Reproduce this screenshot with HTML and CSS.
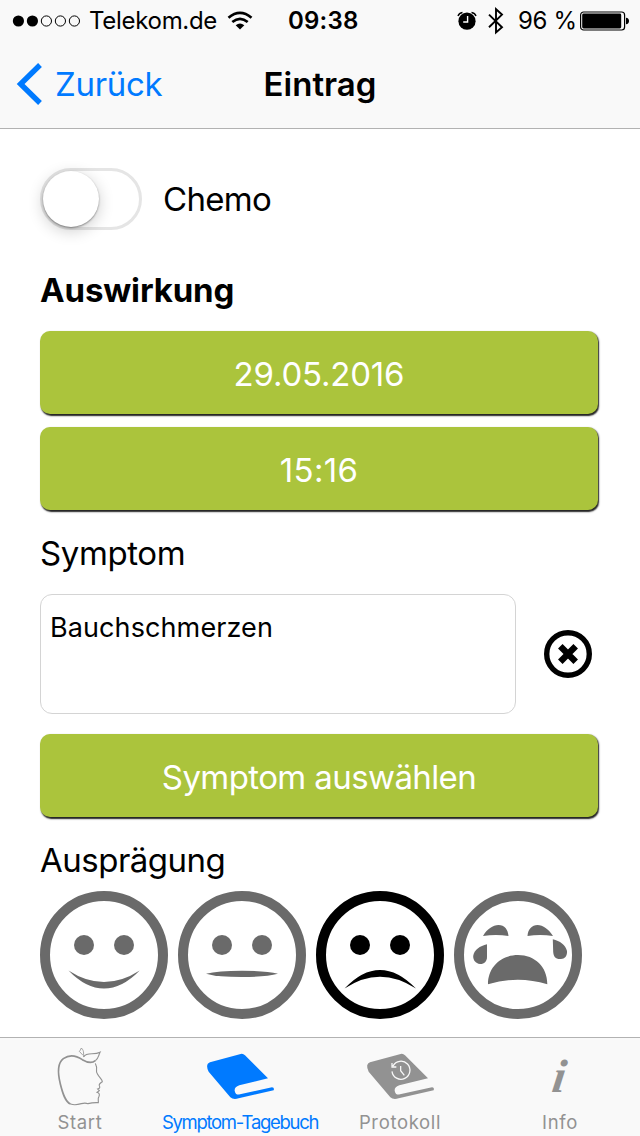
FILE: index.html
```
<!DOCTYPE html>
<html lang="de">
<head>
	<meta charset="UTF-8">
	<title>Eintrag</title>
	<link rel="stylesheet" href="styles.css">
</head>
<body>
	<div id="statusBar">
		<svg class="signal" width="70" height="14" viewBox="0 0 70 14">
			<circle cx="6.4" cy="7" r="5.6"/>
			<circle cx="20.4" cy="7" r="5.6"/>
			<g fill="none" stroke="#000">
				<circle cx="34.4" cy="7" r="5.1"/>
				<circle cx="48.4" cy="7" r="5.1"/>
				<circle cx="62.4" cy="7" r="5.1"/>
			</g>
		</svg>
		<span class="carrier">Telekom.de</span>
		<svg class="wifi" width="26" height="20" viewBox="0 0 26 20">
			<g fill="none" stroke="#000" stroke-width="2.7">
				<path d="M1.5 6.7Q13 -3 24.5 6.7"/>
				<path d="M5.3 11Q13 4.6 20.7 11"/>
			</g>
			<path d="M8.7 14.2Q13 10.8 17.3 14.2L13 18.6Z"/>
		</svg>
		<span class="time">09:38</span>
		<svg class="alarm" width="20" height="20" viewBox="0 0 20 20">
			<circle cx="10" cy="10.2" r="8.6"/>
			<path d="M1 5Q2 2 5.5 1.5M14.5 1.5Q18 2 19 5" fill="none" stroke="#000" stroke-width="1.4"/>
			<path d="M10.6 5V11H6.2" fill="none" stroke="#fff" stroke-width="1.4"/>
		</svg>
		<svg class="bluetooth" width="16" height="28" viewBox="0 0 16 28">
			<path d="M1 7.6L14 20.2L8 25.4V2.2L14 7.6L1 20.2" fill="none" stroke="#000" stroke-width="1.9"/>
		</svg>
		<span class="percent">96 %</span>
		<svg class="battery" width="50" height="20" viewBox="0 0 50 20">
			<rect x="0.6" y="1" width="44" height="18" rx="3" fill="none" stroke="#000" stroke-width="1.2"/>
			<rect x="2.2" y="2.6" width="39" height="14.8" rx="1.4"/>
			<path d="M46 6.8Q49 7 49 10T46 13.2Z"/>
		</svg>
	</div>
	<div id="navBar">
		<a class="back">
			<svg width="26" height="42" viewBox="0 0 26 42"><path d="M24 2L4.6 21L24 40" fill="none" stroke="#007aff" stroke-width="5.4"/></svg>
			<span>Zurück</span>
		</a>
		<span class="title">Eintrag</span>
	</div>

	<div id="content">
		<div class="switchRow">
			<div class="switch"><div class="knob"></div></div>
			<span class="chemo">Chemo</span>
		</div>
		<h2>Auswirkung</h2>
		<button class="mainButton date">29.05.2016</button>
		<button class="mainButton clock">15:16</button>
		<label class="symptomLabel">Symptom</label>
		<div class="symptomRow">
			<div class="textBox">Bauchschmerzen</div>
			<svg class="clear" width="48" height="48" viewBox="0 0 48 48" fill="none" stroke="#000">
				<circle cx="24" cy="24" r="21.3" stroke-width="5.4"/>
				<path d="M16.3 16.3L31.7 31.7M31.7 16.3L16.3 31.7" stroke-width="6.4"/>
			</svg>
		</div>
		<button class="mainButton choose">Symptom auswählen</button>
		<label class="levelLabel">Ausprägung</label>
		<div class="faces">
			<svg class="face" viewBox="0 0 128 128">
				<circle class="ring" cx="64" cy="64" r="59"/>
				<circle cx="44" cy="54" r="10"/>
				<circle cx="84" cy="54" r="10"/>
				<path d="M28.5 79.5Q46 97.6 64 97.6T99.7 79.5Q82 91 64 91T28.5 79.5Z"/>
			</svg>
			<svg class="face" viewBox="0 0 128 128">
				<circle class="ring" cx="64" cy="64" r="59"/>
				<circle cx="44" cy="54" r="10"/>
				<circle cx="84" cy="54" r="10"/>
				<path d="M28 82.8Q40 79.7 64 79.7T100 82.8Q88 86 64 86T28 82.8Z"/>
			</svg>
			<svg class="face selected" viewBox="0 0 128 128">
				<circle class="ring" cx="64" cy="64" r="59"/>
				<circle cx="44" cy="54" r="10"/>
				<circle cx="84" cy="54" r="10"/>
				<path d="M28.5 97.6Q46 79 64 79T100 97.6Q82 85.7 64 85.7T28.5 97.6Z"/>
			</svg>
			<svg class="face" viewBox="0 0 128 128">
				<circle class="ring" cx="64" cy="64" r="59"/>
				<!-- brows -->
				<path d="M29 45C33 38 39 34 44.5 34C50.5 34 54 38.5 54.5 45Q42 43.2 29 45Z"/>
				<path d="M73.5 45C74 38 78 34 83.5 34C89 34 94.5 38 99 45Q86 43.2 73.5 45Z"/>
				<!-- tears -->
				<path d="M33 53.3V66C33 71 29.5 73.3 26 73C21.5 72.5 19 69 19.2 65C20 59 26 55 33 53.3Z"/>
				<path d="M98.8 48.3C106 50 111.5 54 113 60C113.5 65 110.5 68 107 68C102 68.5 99.5 66 99.2 61Z"/>
				<path d="M34 93.3C34 76 47 64 64 64S93.5 76 93.3 93.3Q64 84 34 93.3Z"/>
			</svg>
		</div>
	</div>

	<div id="tabBar">
		<div class="tab start">
			<svg width="60" height="70" viewBox="0 0 180 210" fill="none" stroke="#929292" stroke-width="3.4">
				<path stroke-width="5" d="M136 62C125 71 109 66 97 59C78 46 58 43 40 56C22 70 23 100 31 132C38 160 46 187 62 192"/>
				<path d="M62 192C74 197 84 194 94 191Q105 188 114 191Q129 187 145 188C146 181 142 176 147 169C150 163 147 159 141 157L148 152L143 147C149 145 151 142 148 137C146 131 151 129 157 125C158 119 148 113 142 101C136 91 142 86 139 79L136 70"/>
				<path d="M100 51C111 34 132 47 150 37C145 48 145 57 136 62"/>
				<path d="M103 50C98 45 105 34 94 24Q91 32 88 34L99 46" stroke-width="2.5"/>
			</svg>
			<span>Start</span>
		</div>
		<div class="tab diary active">
			<svg width="71" height="49" viewBox="615 66 213 147">
				<path d="M722 72Q729 70 735 76L804 145L718 166Q703 171 704 182Q707 197 720 193L816 172Q824 173 821 181L716 205Q700 210 691 202L626 125Q615 103 630 97Z"/>
			</svg>
			<span>Symptom-Tagebuch</span>
		</div>
		<div class="tab log">
			<svg width="71" height="49" viewBox="615 66 213 147">
				<path d="M722 72Q729 70 735 76L804 145L718 166Q703 171 704 182Q707 197 720 193L816 172Q824 173 821 181L716 205Q700 210 691 202L626 125Q615 103 630 97Z"/>
				<path d="M696 124A27 27 0 1 0 699 108M696 99V111H709M722 108V122L733 136" fill="none" stroke="#f9f9f9" stroke-width="3.8"/>
			</svg>
			<span>Protokoll</span>
		</div>
		<div class="tab info">
			<i class="infoIcon">i</i>
			<span>Info</span>
		</div>
	</div>
</body>
</html>
```
FILE: styles.css
```
body {
	margin: 0;
	width: 640px;
	height: 1136px;
	display: flex;
	flex-direction: column;
	overflow: hidden;
	background-color: #fff;
	color: #000;
	font-family: Inter, "Liberation Sans", sans-serif;
	font-size: 33px;
	line-height: 40px;
}
svg {
	display: block;
	flex: none;
}
#statusBar {
	display: flex;
	align-items: center;
	height: 41px;
	background-color: #f9f9f9;
	font-size: 24px;
	white-space: nowrap;
}
.signal {
	margin-left: 12px;
}
.carrier {
	width: 138px;
	margin-left: 7px;
	letter-spacing: -0.3px;
}
.time {
	width: 169px;
	margin-left: 35px;
	font-weight: 600;
	letter-spacing: 0.2px;
}
.bluetooth {
	margin-left: 11px;
}
.percent {
	width: 62px;
	margin-left: 14px;
	letter-spacing: -0.3px;
}
#navBar {
	display: grid;
	grid-template-columns: 1fr auto 1fr;
	align-items: center;
	box-sizing: border-box;
	height: 88px;
	padding-bottom: 2px;
	background-color: #f9f9f9;
	border-bottom: 1px solid #b2b2b2;
}
.back {
	display: flex;
	align-items: center;
	gap: 13px;
	padding-left: 16px;
	color: #007aff;
	letter-spacing: -0.3px;
}
.title {
	font-weight: 600;
}
#content {
	flex: 1;
	display: flex;
	flex-direction: column;
	padding: 39px 40px 0;
}
.switchRow {
	display: flex;
	align-items: center;
	gap: 21px;
	height: 62px;
}
.switch {
	box-sizing: border-box;
	width: 102px;
	height: 62px;
	border: 3px solid #e5e5e5;
	border-radius: 31px;
}
.knob {
	width: 56px;
	height: 56px;
	border-radius: 50%;
	background-color: #fff;
	box-shadow: 0 1px 2px rgba(0, 0, 0, 0.4), 0 4px 16px rgba(0, 0, 0, 0.2);
}
.chemo {
	letter-spacing: -0.7px;
}
h2 {
	margin: 40px 0 21px;
	font-size: 33px;
	font-weight: 700;
	letter-spacing: -0.15px;
}
.mainButton {
	width: 558px;
	height: 83px;
	margin: 0 0 13px;
	padding: 3px 0 0;
	border: none;
	border-radius: 10px;
	background-color: #abc43c;
	box-shadow: 1px 1.5px 1.5px #222;
	color: #fff;
	font: inherit;
}
.date {
	letter-spacing: -0.2px;
}
.clock {
	letter-spacing: 0.3px;
}
.choose {
	letter-spacing: -0.6px;
}
.symptomLabel {
	margin-top: 10px;
	letter-spacing: -0.4px;
}
.symptomRow {
	display: flex;
	align-items: center;
	gap: 28px;
	margin: 21px 0 20px;
}
.textBox {
	box-sizing: border-box;
	width: 476px;
	height: 120px;
	padding: 13px 9px;
	border: 1px solid #d4d4d4;
	border-radius: 12px;
	font-size: 27px;
	letter-spacing: 0.1px;
}
.levelLabel {
	margin-top: 10px;
	letter-spacing: -0.5px;
}
.faces {
	display: flex;
	gap: 10px;
	margin-top: 11px;
}
.face {
	width: 128px;
	height: 128px;
	fill: #6a6a6a;
	stroke: none;
}
.face .ring {
	fill: none;
	stroke: #6a6a6a;
	stroke-width: 10;
}
.face.selected {
	fill: #000;
}
.face.selected .ring {
	stroke: #000;
}
#tabBar {
	display: flex;
	height: 98px;
	border-top: 1px solid #b2b2b2;
	background-color: #f9f9f9;
}
.tab {
	flex: 1;
	min-width: 0;
	display: flex;
	flex-direction: column;
	justify-content: flex-end;
	align-items: center;
	color: #929292;
	fill: #929292;
	font-size: 18.5px;
	line-height: 27px;
	letter-spacing: 0.65px;
	white-space: nowrap;
}
.tab.active {
	color: #007aff;
	fill: #007aff;
	letter-spacing: -1.3px;
}
.start svg {
	margin-bottom: -1px;
}
.diary svg, .log svg {
	margin-bottom: 8px;
}
.infoIcon {
	margin-bottom: 13px;
	font: italic bold 47px/40px "Liberation Serif", serif;
	transform: skewX(-8deg);
}
```
